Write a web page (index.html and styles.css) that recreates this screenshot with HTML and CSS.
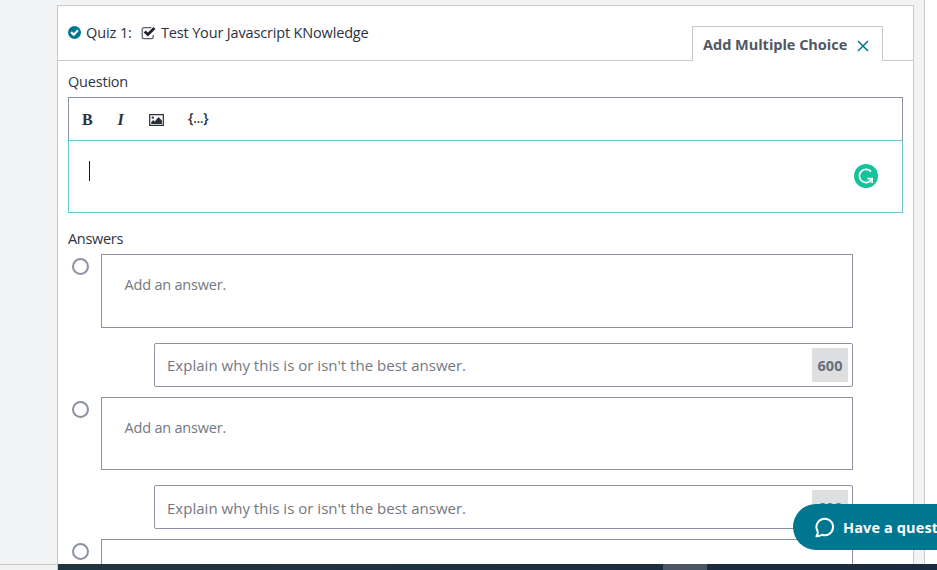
FILE: index.html
```html
<!DOCTYPE html>
<html lang="en">
<head>
<meta charset="utf-8">
<title>Quiz editor</title>
<link rel="stylesheet" href="styles.css">
</head>
<body>
<div class="page">
  <div class="column">
    <main class="card">
      <header class="card-head">
        <div class="quiz">
          <svg class="done" viewBox="0 0 13 13"><circle cx="6.5" cy="6.5" r="6.5"/><path d="M3.1 6.1l2.6 2.6 4.3-4.4"/></svg>
          <span class="quiz-no">Quiz 1:</span>
          <svg class="check" viewBox="0 0 15 14"><path class="frame" d="M10.3 1.6H3.1C2 1.6 1.2 2.4 1.2 3.5v7.2c0 1.1.8 1.9 1.9 1.9h7.2c1.1 0 1.9-.8 1.9-1.9V9"/><path class="tick" d="M3.7 5.4l3.2 3.2 6.6-6.5"/></svg>
          <span class="quiz-name">Test Your Javascript KNowledge</span>
        </div>
        <div class="tab"><span class="tab-name">Add Multiple Choice</span><svg class="close" viewBox="0 0 12 12"><path d="M1 1l10 10M11 1L1 11"/></svg></div>
      </header>
      <section class="form">
        <div class="label question">Question</div>
        <div class="toolbar">
          <b>B</b><i>I</i>
          <svg class="image" viewBox="0 0 15 12"><path class="frame" d="M.7.7h13.6v10.6H.7z"/><path d="M2.2 10V8l2-2 1.5 1.4L9.5 3l3.4 3.4V10z"/><circle cx="3.8" cy="3.6" r="1.2"/></svg>
          <span class="code">{<span class="dots">…</span>}</span>
        </div>
        <div class="editor">
          <span class="caret"></span>
          <svg class="grammar" viewBox="0 0 24 24"><circle cx="12" cy="12" r="12"/><path d="M17 7.6A6.6 6.6 0 1 0 16.4 16.9M13.4 14.6h4.7v4.5M17.8 14.8l-2 2.2"/></svg>
        </div>
        <div class="label answers">Answers</div>
        <div class="answer"><span class="radio"></span><div class="fields"><div class="box">Add an answer.</div><div class="explain"><span>Explain why this is or isn't the best answer.</span><b>600</b></div></div></div>
        <div class="answer"><span class="radio"></span><div class="fields"><div class="box">Add an answer.</div><div class="explain"><span>Explain why this is or isn't the best answer.</span><b>600</b></div></div></div>
        <div class="answer"><span class="radio"></span><div class="fields"><div class="box"></div></div></div>
      </section>
    </main>
  </div>
  <div class="aside"></div>
</div>
<div class="bottom"><div class="status"></div><div class="taskbar"><div class="active"></div></div></div>
<div class="help"><svg viewBox="0 0 20 21"><path d="M2.6 14.2A8.3 8.3 0 1 1 7 17.8C5.4 18.9 3.5 19.4 1.4 19.3 2.6 17.8 3.1 16.2 2.6 14.2z"/></svg><span>Have a question?</span></div>
</body>
</html>
```
FILE: styles.css
```css
* { box-sizing: border-box; }
body { margin: 0; width: 937px; height: 570px; overflow: hidden; position: relative; background: #f1f3f5; font-family: "Open Sans", "Noto Sans", sans-serif; font-size: 14.5px; color: #2a3040; }
svg { display: block; flex: none; fill: none; }
.page { display: flex; height: 570px; overflow: hidden; }
.column { width: 925px; flex: none; border-right: 1px solid #c7c9cb; padding: 5px 10px 0 57px; }
.aside { flex: 1; background: #fff; }
.card { width: 857px; height: 620px; border: 1px solid #c7c9cb; background: #fff; }
.card-head { height: 55px; border-bottom: 1px solid #c7c9cb; display: flex; justify-content: space-between; padding: 0 30px 0 10px; }
.quiz { display: flex; height: 53px; align-items: center; white-space: nowrap; }
.done { width: 13px; height: 13px; margin-right: 5px; }
.done circle { fill: #007791; }
.done path { stroke: #fff; stroke-width: 2.2; }
.quiz-no { width: 55px; letter-spacing: -.1px; }
.check { width: 15px; height: 14px; margin-right: 5px; }
.check .frame { stroke: #55596a; stroke-width: 1.2; }
.check .tick { stroke: #20242f; stroke-width: 2.8; }
.quiz-name { letter-spacing: -.16px; }
.tab { width: 191px; height: 35px; margin-top: 20px; border: 1px solid #c7c9cb; border-bottom: 0; background: #fff; display: flex; align-items: center; padding: 1px 0 0 10px; white-space: nowrap; }
.tab-name { width: 154px; font-weight: 700; color: #505763; letter-spacing: -.02px; }
.close { width: 12px; height: 12px; margin-top: 3px; }
.close path { stroke: #007791; stroke-width: 1.5; }
.form { padding: 0 10px; }
.label { line-height: 20px; letter-spacing: -.2px; color: #30343f; }
.question { margin: 11px 0 5px; }
.toolbar { height: 43px; border: 1px solid #8a92a3; border-bottom: 0; display: flex; align-items: center; padding: 1px 0 0 13px; font-family: "Liberation Serif", serif; font-size: 16px; color: #29303b; }
.toolbar b { width: 35.5px; }
.toolbar i { width: 31.5px; font-weight: 700; }
.image { width: 15px; height: 12px; margin-right: 24px; fill: #29303b; }
.image .frame { fill: none; stroke: #29303b; stroke-width: 1.2; }
.code { font-family: "Open Sans", sans-serif; font-weight: 600; font-size: 14px; line-height: 16px; margin-top: -3px; }
.dots { font-size: 12px; }
.editor { height: 73px; border: 1px solid #6bc4d2; display: flex; justify-content: space-between; padding: 20px 24px 0 20px; }
.caret { width: 1px; height: 20px; background: #14171c; }
.grammar { width: 24px; height: 24px; margin-top: 3px; }
.grammar circle { fill: #15c39a; }
.grammar path { stroke: #fff; stroke-width: 1.7; }
.answers { margin: 16px 0 5px; letter-spacing: -.3px; }
.answer { display: flex; height: 142.5px; }
.radio { width: 17px; height: 17px; margin: 4px 12px 0 4px; border: 2px solid #8a92a3; border-radius: 50%; flex: none; }
.fields { width: 752px; }
.box { height: 73.5px; border: 1px solid #8a92a3; padding: 20px 0 0 22.5px; line-height: 20px; color: #737882; letter-spacing: -.2px; }
.explain { height: 44px; margin: 15.4px 0 0 53px; border: 1px solid #8a92a3; border-radius: 2px; display: flex; align-items: center; justify-content: space-between; padding: 0 4px 0 12px; color: #737882; white-space: nowrap; }
.explain span { font-size: 15px; letter-spacing: .02px; padding-top: 1px; }
.explain b { width: 36px; height: 34px; line-height: 35px; text-align: center; background: #dedfe0; color: #686f7a; }
.bottom { position: absolute; left: 0; bottom: 0; width: 937px; display: flex; }
.status { width: 58px; height: 6px; border-top: 1px solid #c7c9cb; background: #f1f1f1; border-right: 1px solid #c7c9cb; }
.taskbar { flex: 1; height: 6px; background: linear-gradient(90deg, #20363f, #1c2e3f 60%, #19293f); padding-left: 605px; }
.active { width: 44px; height: 6px; background: #4b5564; }
.help { position: absolute; left: 793px; top: 504px; width: 190px; height: 46px; border-radius: 23px; background: #007791; color: #fff; display: flex; align-items: center; padding-left: 22px; font-weight: 700; letter-spacing: .12px; white-space: nowrap; }
.help svg { width: 20px; height: 21px; margin-right: 8px; }
.help path { stroke: #fff; stroke-width: 2; stroke-linejoin: round; }
```
